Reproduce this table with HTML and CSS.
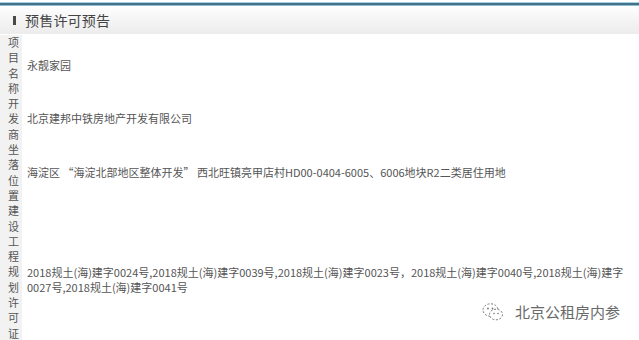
FILE: index.html
```html
<!DOCTYPE html>
<html lang="zh-CN">
<head>
<meta charset="utf-8">
<title>预售许可预告</title>
<link rel="stylesheet" href="styles.css">
</head>
<body>
<div class="page">
  <div class="stripe"></div>
  <div class="header">
    <span class="bullet"></span>
    <span class="title">预售许可预告</span>
  </div>
  <div class="table">
    <div class="label">项目名称</div>
    <div class="value">永靓家园</div>
    <div class="label">开发商</div>
    <div class="value">北京建邦中铁房地产开发有限公司</div>
    <div class="label">坐落位置</div>
    <div class="value">海淀区 “海淀北部地区整体开发” 西北旺镇亮甲店村HD00-0404-6005、6006地块R2二类居住用地</div>
    <div class="label label-last">建设工程规划许可证</div>
    <div class="value">2018规土(海)建字0024号,2018规土(海)建字0039号,2018规土(海)建字0023号，2018规土(海)建字0040号,2018规土(海)建字0027号,2018规土(海)建字0041号</div>
  </div>
  <div class="watermark">
    <svg class="wx" width="22" height="20" viewBox="0 0 22 20">
      <ellipse cx="8.5" cy="8" rx="7.5" ry="6.2" fill="none" stroke="#777" stroke-width="1" stroke-dasharray="2 1.6"/>
      <ellipse cx="14" cy="12.5" rx="6.5" ry="5.3" fill="#fff" stroke="#777" stroke-width="1" stroke-dasharray="2 1.6"/>
      <circle cx="6" cy="6.5" r="0.9" fill="#777"/>
      <circle cx="10.5" cy="6.5" r="0.9" fill="#777"/>
      <circle cx="12" cy="11.5" r="0.8" fill="#777"/>
      <circle cx="16" cy="11.5" r="0.8" fill="#777"/>
    </svg>
    <span class="wm-text">北京公租房内参</span>
  </div>
</div>
</body>
</html>
```
FILE: styles.css
```css
html, body {
  margin: 0;
  padding: 0;
  background: #ffffff;
}
body {
  font-family: "Noto Sans CJK SC", "Noto Sans", sans-serif;
  color: #555;
  width: 639px;
  height: 340px;
  overflow: hidden;
}
.page {
  position: relative;
  width: 639px;
  height: 340px;
  overflow: hidden;
  padding-top: 2px;
  box-sizing: border-box;
}
.stripe {
  height: 4px;
  background: linear-gradient(to bottom, #a3d2e0 0, #a3d2e0 1px, #44708a 1px, #44708a 3px, #8fbecd 3px, #8fbecd 4px);
}
.header {
  height: 28px;
  display: flex;
  align-items: center;
  padding-left: 13px;
  background: linear-gradient(to bottom, #ffffff 0%, #f6f6f6 40%, #ececec 100%);
  box-sizing: border-box;
}
.bullet {
  width: 3px;
  height: 9px;
  background: #4a4a4a;
  margin-right: 9px;
}
.title {
  font-size: 14px;
  color: #444;
  line-height: 1;
  letter-spacing: 0.2px;
}
.table {
  display: grid;
  grid-template-columns: 22px 1fr;
  padding-top: 1px;
}
.label {
  background: #f2f2f2;
  font-size: 11px;
  line-height: 15.3px;
  width: 11px;
  padding: 0 3px 0 8px;
  word-break: break-all;
  color: #555;
}
.label-last {
  padding-bottom: 16px;
}
.value {
  display: flex;
  align-items: center;
  font-size: 11px;
  line-height: 15.6px;
  padding: 0 12px 0 5px;
  color: #555;
}
.watermark {
  position: absolute;
  left: 482px;
  top: 302px;
  display: flex;
  align-items: center;
  gap: 11px;
}
.wm-text {
  font-size: 15px;
  color: #6a6a6a;
  line-height: 20px;
  text-shadow: 0 0 2px #fff, 0 0 1px #fff;
}
```
